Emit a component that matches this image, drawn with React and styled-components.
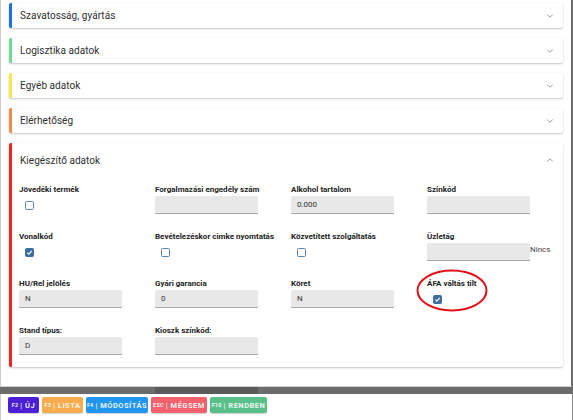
import styled, { createGlobalStyle } from "styled-components";
import { ChevronDown, ChevronUp } from "lucide-react";

const GlobalStyle = createGlobalStyle`
  html, body {
    margin: 0;
    padding: 0;
    background: #ffffff;
    font-family: Roboto, "Liberation Sans", sans-serif;
  }
  * { box-sizing: border-box; }
`;

const Screen = styled.div`
  width: 573px;
  height: 420px;
  display: flex;
  flex-direction: column;
  overflow: hidden;
`;

const Panel = styled.div`
  height: 387px;
  padding: 3px 8px 0 8px;
  border-left: 1px solid #c9c9c9;
  border-right: 2px solid #6a6a6a;
  border-bottom: 1px solid #cfcfcf;
  background: #fff;
  display: flex;
  flex-direction: column;
  gap: 10px;
  overflow: hidden;
`;

const Card = styled.div`
  background: #fff;
  border-left: 3px solid ${(p) => p.$color};
  border-radius: 2px;
  box-shadow: 0 1px 2px rgba(0, 0, 0, 0.22), 0 0 1px rgba(0, 0, 0, 0.08);
  flex-shrink: 0;
`;

const Header = styled.div`
  height: ${(p) => (p.$open ? "34px" : "25px")};
  display: flex;
  align-items: center;
  justify-content: space-between;
  padding: 0 8px 0 8px;
  color: #7a7a7a;
`;

const Title = styled.span`
  font-size: 10px;
  color: #2f2f2f;
  letter-spacing: 0.05px;
`;

const Body = styled.div`
  display: grid;
  grid-template-columns: repeat(4, 103px);
  column-gap: 33px;
  row-gap: 17px;
  padding: 7px 0 12px 7px;
`;

const Field = styled.div`
  position: relative;
  display: flex;
  flex-direction: column;
`;

const Label = styled.div`
  font-size: 8px;
  font-weight: 700;
  line-height: 11px;
  color: #222;
  margin-bottom: 1px;
  white-space: nowrap;
`;

const InputRow = styled.div`
  display: flex;
  align-items: flex-start;
`;

const Input = styled.div`
  width: 103px;
  height: 18px;
  flex-shrink: 0;
  background: #e8e8e8;
  border-bottom: 1px solid #a9a9a9;
  border-radius: 2px 2px 0 0;
  font-size: 8px;
  color: #333;
  display: flex;
  align-items: center;
  padding-left: 6px;
`;

const Adornment = styled.span`
  font-size: 8px;
  color: #444;
  margin-top: 2px;
  white-space: nowrap;
`;

const CheckSlot = styled.div`
  height: 18px;
  display: flex;
  align-items: center;
  padding-left: 6px;
`;

const Box = styled.span`
  width: 9px;
  height: 9px;
  border-radius: 1.5px;
  border: 1.3px solid ${(p) => (p.$checked ? "#3c6d9e" : "#5c84ad")};
  background: ${(p) => (p.$checked ? "#3c6d9e" : "#fff")};
  display: inline-flex;
  align-items: center;
  justify-content: center;
`;

const Circle = styled.svg`
  position: absolute;
  left: -11px;
  top: -9px;
  width: 72px;
  height: 43px;
  pointer-events: none;
  overflow: visible;
`;

const Track = styled.div`
  height: 7px;
  background: #6c6c6c;
  display: flex;
`;

const Thumb = styled.div`
  margin-left: 155px;
  width: 103px;
  background: #5a5a5a;
`;

const Footer = styled.div`
  flex: 1;
  display: flex;
  align-items: flex-start;
  gap: 3px;
  padding: 3px 7px 0 7px;
  border-left: 1px solid #c9c9c9;
  border-right: 1px solid #8a8a8a;
`;

const Button = styled.button`
  height: 16px;
  width: ${(p) => p.$w}px;
  padding: 0;
  border: none;
  border-radius: 2px;
  background: ${(p) => p.$bg};
  color: rgba(255, 255, 255, 0.92);
  font-family: Roboto, "Liberation Sans", sans-serif;
  font-size: 7.5px;
  font-weight: 700;
  letter-spacing: 0.5px;
  text-transform: uppercase;
  box-shadow: 0 1px 1px rgba(0, 0, 0, 0.18);
  display: flex;
  align-items: center;
  justify-content: center;
  white-space: nowrap;
`;

const Key = styled.span`
  font-size: 5.5px;
  letter-spacing: 0.2px;
  margin-right: 2px;
`;

function Check({ checked }) {
  return (
    <CheckSlot>
      <Box $checked={checked}>
        {checked && (
          <svg width="7" height="7" viewBox="0 0 10 10">
            <path d="M1.8 5.2 L4 7.3 L8.3 2.6" fill="none" stroke="#fff" strokeWidth="1.6" />
          </svg>
        )}
      </Box>
    </CheckSlot>
  );
}

const collapsed = [
  { title: "Szavatosság, gyártás", color: "#1f6fe0" },
  { title: "Logisztika adatok", color: "#6fdc95" },
  { title: "Egyéb adatok", color: "#f4e84a" },
  { title: "Elérhetőség", color: "#f48a4c" },
];

const fields = [
  { label: "Jövedéki termék", check: false },
  { label: "Forgalmazási engedély szám", value: "" },
  { label: "Alkohol tartalom", value: "0.000" },
  { label: "Színkód", value: "" },
  { label: "Vonalkód", check: true },
  { label: "Bevételezéskor cimke nyomtatás", check: false },
  { label: "Közvetített szolgáltatás", check: false },
  { label: "Üzletág", value: "", adorn: "Nincs" },
  { label: "HU/Rel jelölés", value: "N" },
  { label: "Gyári garancia", value: "0" },
  { label: "Köret", value: "N" },
  { label: "ÁFA váltás tilt", check: true, circled: true },
  { label: "Stand típus:", value: "D" },
  { label: "Kioszk színkód:", value: "" },
];

const buttons = [
  { key: "F2", text: "Új", bg: "#4b1fd6", w: 31 },
  { key: "F3", text: "Lista", bg: "#f9ac4d", w: 41 },
  { key: "F4", text: "Módosítás", bg: "#2096f0", w: 62 },
  { key: "ESC", text: "Mégsem", bg: "#f2616c", w: 56 },
  { key: "F10", text: "Rendben", bg: "#59c08a", w: 57 },
];

export default function App() {
  return (
    <Screen>
      <GlobalStyle />
      <Panel>
        {collapsed.map((c) => (
          <Card key={c.title} $color={c.color}>
            <Header>
              <Title>{c.title}</Title>
              <ChevronDown size={10} strokeWidth={1.8} />
            </Header>
          </Card>
        ))}
        <Card $color="#f0241c">
          <Header $open>
            <Title>Kiegészítő adatok</Title>
            <ChevronUp size={10} strokeWidth={1.8} />
          </Header>
          <Body>
            {fields.map((f) => (
              <Field key={f.label}>
                <Label>{f.label}</Label>
                {"check" in f ? (
                  <Check checked={f.check} />
                ) : (
                  <InputRow>
                    <Input>{f.value}</Input>
                    {f.adorn && <Adornment>{f.adorn}</Adornment>}
                  </InputRow>
                )}
                {f.circled && (
                  <Circle viewBox="0 0 72 43">
                    <ellipse cx="36" cy="21.5" rx="34.5" ry="20" fill="none" stroke="#e3101a" strokeWidth="2" />
                  </Circle>
                )}
              </Field>
            ))}
          </Body>
        </Card>
      </Panel>
      <Track>
        <Thumb />
      </Track>
      <Footer>
        {buttons.map((b) => (
          <Button key={b.key} $bg={b.bg} $w={b.w}>
            <Key>{b.key}</Key>| {b.text}
          </Button>
        ))}
      </Footer>
    </Screen>
  );
}
